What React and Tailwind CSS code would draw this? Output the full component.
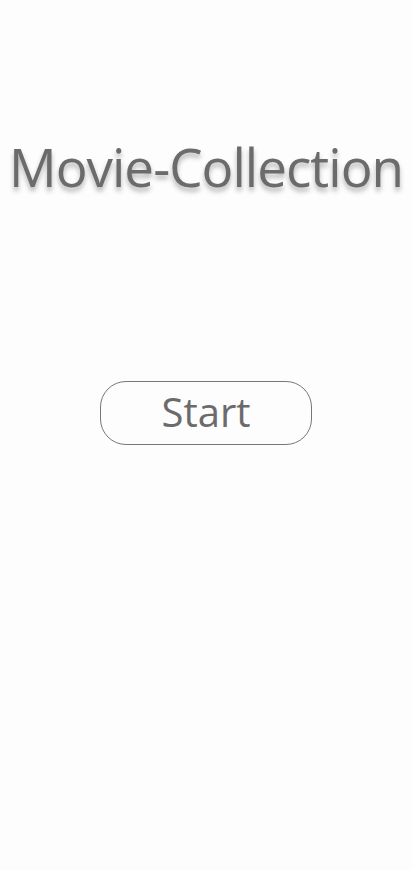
export default function App() {
  return (
    <div className="min-h-[870px] w-full bg-[#fdfdfd] flex flex-col items-center font-['Open_Sans',sans-serif] text-[#6b6b6b]">
      <h1 className="mt-[135px] text-[53px] leading-[64px] tracking-[-1px] [text-shadow:0_4px_5px_rgba(0,0,0,0.3)]">
        Movie-Collection
      </h1>
      <button className="mt-[182px] w-[212px] h-[64px] rounded-[26px] border border-[#777] bg-transparent text-[40px] leading-none text-[#6b6b6b] pb-[2px]">
        Start
      </button>
    </div>
  );
}
